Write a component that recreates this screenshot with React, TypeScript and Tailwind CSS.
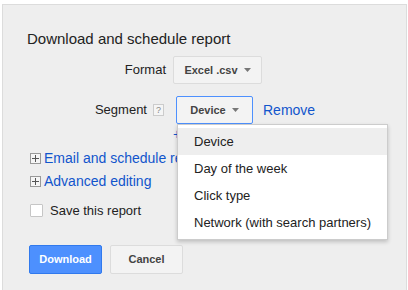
import React from "react";

function PlusBox() {
  return (
    <span className="mr-[3px] flex h-[11px] w-[11px] items-center justify-center border border-[#999] bg-[#f5f5f5]">
      <svg width="7" height="7" viewBox="0 0 7 7">
        <path d="M3.5 0v7M0 3.5h7" stroke="#555" strokeWidth="1" />
      </svg>
    </span>
  );
}

function Caret() {
  return (
    <svg width="7" height="4" viewBox="0 0 7 4" className="ml-[6px]">
      <path d="M0 0h7L3.5 4z" fill="#777" />
    </svg>
  );
}

const menuItems = ["Device", "Day of the week", "Click type", "Network (with search partners)"];

export default function App() {
  return (
    <div
      className="h-[290px] w-[408px] overflow-hidden bg-white pl-[2px] pt-[4px]"
      style={{ fontFamily: "'Liberation Sans', Arial, sans-serif" }}
    >
      <div className="relative h-[300px] w-[405px] border-l border-t border-r border-[#dcdcdc] bg-[#eeeeee] pl-[24px] text-[13px] text-[#222]">
        <div className="pt-[25px] text-[15px] leading-[18px] text-[#222]">Download and schedule report</div>

        <div className="mt-[8px] flex items-center">
          <div className="w-[139px] text-right">Format</div>
          <button className="ml-[7px] flex h-[28px] w-[89px] items-center justify-center rounded-[2px] border border-[#dcdcdc] bg-[#f3f3f3] text-[11px] font-bold text-[#444]">
            Excel .csv
            <Caret />
          </button>
        </div>

        <div className="mt-[12px] flex items-center">
          <div className="flex w-[137px] items-center justify-end">
            <span>Segment</span>
            <span className="ml-[6px] flex h-[12px] w-[11px] items-center justify-center border border-[#ccc] bg-[#f5f5f5] text-[9px] leading-none text-[#888]">
              ?
            </span>
          </div>
          <button className="ml-[12px] flex h-[28px] w-[77px] items-center justify-center rounded-[2px] border border-[#4d90fe] bg-[#f3f3f3] text-[11px] font-bold text-[#444]">
            Device
            <Caret />
          </button>
          <span className="ml-[10px] text-[14px] text-[#1155cc]">Remove</span>
        </div>

        <div className="ml-[146px] mt-[2px] h-[16px] text-[14px] leading-[16px] text-[#1155cc]">+</div>

        <div className="mt-[7px] flex h-[18px] items-center text-[14px] text-[#1155cc]">
          <span className="ml-[3px]">
            <PlusBox />
          </span>
          Email and schedule report
        </div>
        <div className="mt-[5px] flex h-[18px] items-center text-[14px] text-[#1155cc]">
          <span className="ml-[3px]">
            <PlusBox />
          </span>
          Advanced editing
        </div>

        <div className="mt-[11px] flex items-center">
          <span className="ml-[3px] h-[13px] w-[13px] rounded-[1px] border border-[#c6c6c6] bg-white" />
          <span className="ml-[7px] text-[13px] text-[#222]">Save this report</span>
        </div>

        <div className="mt-[24px] flex">
          <button className="ml-[2px] h-[29px] w-[73px] rounded-[2px] border border-[#3079ed] bg-[#4d90fe] text-[11px] font-bold text-white">
            Download
          </button>
          <button className="ml-[8px] h-[29px] w-[73px] rounded-[2px] border border-[#dcdcdc] bg-[#f3f3f3] text-[11px] font-bold text-[#444]">
            Cancel
          </button>
        </div>

        <div className="absolute left-[174px] top-[119px] w-[211px] border border-[#ccc] bg-white py-[3px] shadow-[0_2px_4px_rgba(0,0,0,0.2)]">
          {menuItems.map((item, i) => (
            <div
              key={item}
              className={`flex h-[27px] items-center pl-[16px] text-[13px] text-[#222] ${i === 0 ? "bg-[#eeeeee]" : ""}`}
            >
              {item}
            </div>
          ))}
        </div>
      </div>
    </div>
  );
}
